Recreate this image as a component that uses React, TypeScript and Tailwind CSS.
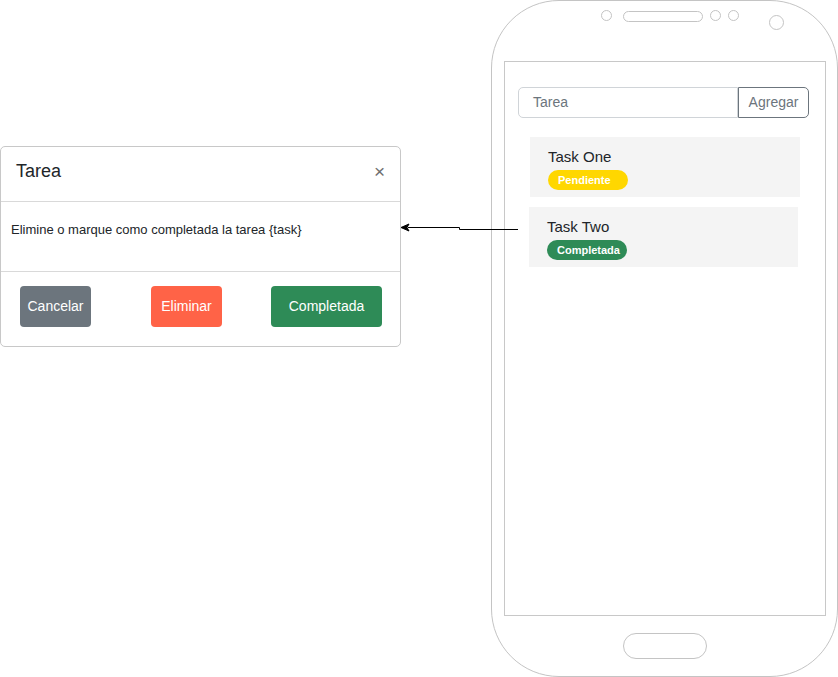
import React from 'react'

type Task = { name: string; status: 'Pendiente' | 'Completada'; offset: string }

const tasks: Task[] = [
  { name: 'Task One', status: 'Pendiente', offset: 'ml-[25px] w-[270px]' },
  { name: 'Task Two', status: 'Completada', offset: 'ml-[24px] w-[269px]' },
]

function TaskModal() {
  return (
    <div className="absolute left-0 top-[146px] w-[401px] h-[201px] flex flex-col border border-[#c8c8c8] rounded-[5px] bg-white">
      {/* Header */}
      <div className="h-[55px] shrink-0 flex items-center justify-between pl-[15px] pr-[15px] pb-[6px] border-b border-[#d9d9d9]">
        <span className="text-[18px] text-[#212529]">Tarea</span>
        <span className="text-[19px] leading-none text-[#6f6f6f]">×</span>
      </div>

      {/* Body */}
      <div className="h-[70px] shrink-0 pl-[10px] pt-[18px] border-b border-[#d9d9d9]">
        <p className="text-[13px] text-[#212529]">Elimine o marque como completada la tarea {'{task}'}</p>
      </div>

      {/* Footer */}
      <div className="flex-1 flex items-start pt-[14px] pl-[19px] gap-[60px]">
        <button className="w-[71px] h-[41px] rounded-[4px] bg-[#6c757d] text-white text-[14px]">Cancelar</button>
        <button className="w-[71px] h-[41px] rounded-[4px] bg-[#ff6347] text-white text-[14px]">Eliminar</button>
        <button className="ml-[-11px] w-[111px] h-[41px] rounded-[4px] bg-[#2e8b57] text-white text-[14px]">Completada</button>
      </div>
    </div>
  )
}

function PhoneTop() {
  // sensores, altavoz y cámara del teléfono
  return (
    <svg className="w-full h-full" viewBox="0 0 345 60" fill="none" stroke="#c4c4c4" strokeWidth="1">
      <circle cx="114.5" cy="14.5" r="5" />
      <rect x="131.5" y="10.5" width="79" height="10" rx="5" />
      <circle cx="223.5" cy="14.5" r="5" />
      <circle cx="241.5" cy="14.5" r="5" />
      <circle cx="284.5" cy="21.5" r="7" />
    </svg>
  )
}

function Phone() {
  return (
    <div className="absolute left-[491px] top-0 w-[347px] h-[677px] flex flex-col border border-[#c4c4c4] rounded-[68px] bg-white">
      <div className="h-[60px] shrink-0">
        <PhoneTop />
      </div>

      {/* Pantalla */}
      <div className="ml-[12px] w-[322px] h-[555px] shrink-0 border border-[#c8c8c8] flex flex-col">
        <div className="ml-[13px] mt-[25px] flex h-[31px]">
          <div className="w-[220px] h-full border border-[#d0d4d8] rounded-l-[5px] flex items-center pl-[14px] text-[14px] text-[#6c757d]">
            Tarea
          </div>
          <button className="w-[71px] h-full border border-[#6c757d] rounded-r-[5px] text-[14px] text-[#6c757d]">
            Agregar
          </button>
        </div>

        <div className="mt-[19px] flex flex-col gap-[10px]">
          {tasks.map(t => (
            <div key={t.name} className={`${t.offset} h-[60px] bg-[#f4f4f4] pl-[18px] pt-[11px]`}>
              <div className="text-[15px] leading-[18px] text-[#212529]">{t.name}</div>
              <span
                className={`mt-[4px] w-[80px] h-[20px] rounded-full flex items-center pl-[10px] text-[11px] font-bold text-white ${
                  t.status === 'Pendiente' ? 'bg-[#ffd700]' : 'bg-[#2e8b57] pl-[9px]'
                }`}
              >
                {t.status}
              </span>
            </div>
          ))}
        </div>
      </div>

      <div className="flex-1 flex items-center justify-center">
        <div className="w-[84px] h-[26px] rounded-[13px] border border-[#c4c4c4]" />
      </div>
    </div>
  )
}

function Connector() {
  return (
    <svg className="absolute left-0 top-0 pointer-events-none" width="838" height="677">
      <path d="M518 229.5 H459.5 V227.5 H408" stroke="#000" strokeWidth="1" fill="none" />
      <path d="M401 227.5 L409 224 L407 227.5 L409 231 Z" fill="#000" stroke="#000" strokeWidth="1" />
    </svg>
  )
}

export default function App() {
  return (
    <div className="relative w-[838px] h-[677px] bg-white overflow-hidden font-['Liberation_Sans',Arial,sans-serif]">
      <TaskModal />
      <Phone />
      <Connector />
    </div>
  )
}
